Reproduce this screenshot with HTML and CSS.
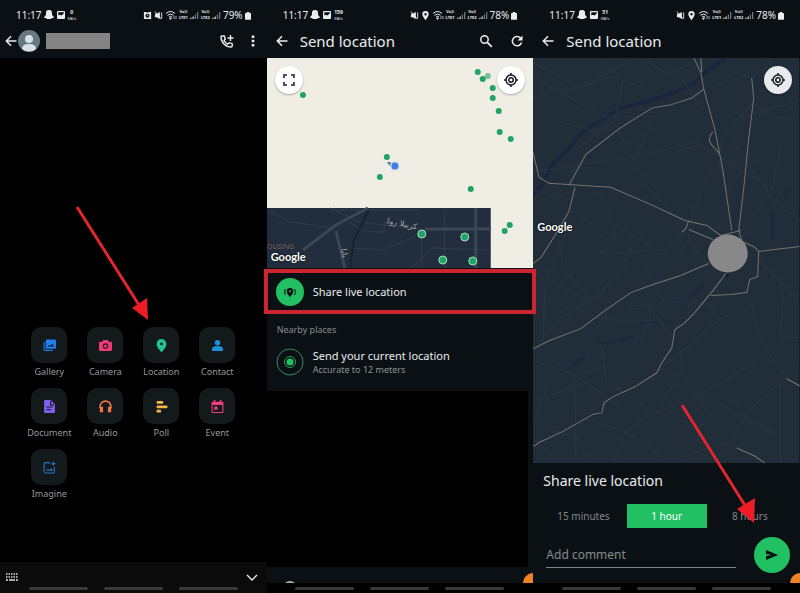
FILE: index.html
```
<!DOCTYPE html>
<html lang="en">
<head>
    <meta charset="UTF-8">
    <meta name="viewport" content="width=device-width, initial-scale=1.0">
    <title>Share live location</title>
    <link rel="stylesheet" href="styles.css">
</head>
<body>
    <!-- Shared icons -->
    <svg class="defs" width="0" height="0" aria-hidden="true">
        <symbol id="snap" viewBox="0 0 10 10"><path d="M5 0c2.500 0 3.300 1.500 3 4 0 1 1 2.500 2 3 0 1-1 1-2 1-1 1.500-2 1-3 1s-2 .5-3-1C1 8 0 8 0 7c1-.5 2-2 2-3-.3-2.500.5-4 3-4z" fill="currentColor"/></symbol>
        <symbol id="photo" viewBox="0 0 10 10"><path d="M2 1h6q1 0 1 1v6q0 1-1 1H2q-1 0-1-1V2q0-1 1-1zm.3 1.300v3.200l1.700-.8 1.600.8L8 3V2.300z" fill="currentColor" fill-rule="evenodd"/></symbol>
        <symbol id="alarm" viewBox="0 0 10 10"><path d="M1 1h2l1 .7h2L7 1h2v8H1z" fill="currentColor"/><circle cx="5" cy="5.300" r="2.300" fill="#0b1014"/><path d="M5 4v1.500h1" stroke="currentColor" fill="none" stroke-width=".8"/></symbol>
        <symbol id="mute" viewBox="0 0 10 10"><path d="M1 3h2L6.500 1v8L3 7H1z" fill="currentColor"/><path d="M1 .5l7 8.500M8.500 1.500v7" stroke="currentColor" stroke-width="1"/></symbol>
        <symbol id="pin" viewBox="0 0 10 10"><path d="M5 0a3.500 3.500 0 0 1 3.500 3.500C8.500 6 5 10 5 10S1.500 6 1.500 3.500A3.500 3.500 0 0 1 5 0zm0 2.300a1.300 1.300 0 1 0 0 2.600 1.300 1.300 0 0 0 0-2.600z" fill="currentColor"/></symbol>
        <symbol id="wifi" viewBox="0 0 12 10"><path d="M1 3.500q4.500-4 9 0M2.500 5.300q3-2.500 6 0M4 7q1.500-1.200 3 0" stroke="currentColor" fill="none"/><path d="M4.500 8h2l-1 1.500zM9 6v3M11 6v3" fill="currentColor" stroke="currentColor" stroke-width=".7"/></symbol>
        <symbol id="bars" viewBox="0 0 10 10"><path d="M1 9V7.500M3.500 9V6" stroke="currentColor" stroke-width="1.300"/><path d="M6 9V4M8.500 9V1" stroke="currentColor" stroke-width="1.300" opacity=".5"/></symbol>
        <symbol id="battery" viewBox="0 0 7 10"><path d="M2 1h3v1h1q1 0 1 1v6q0 1-1 1H1q-1 0-1-1V3q0-1 1-1h1z" fill="currentColor"/></symbol>
        <symbol id="back" viewBox="0 0 12 12"><path d="M11.500 6H1.500M6 1.300L1.300 6 6 10.700" stroke="currentColor" stroke-width="1.500" fill="none"/></symbol>
        <symbol id="target" viewBox="0 0 16 16"><circle cx="8" cy="8" r="5" fill="none" stroke="#1a1a1a" stroke-width="1.500"/><circle cx="8" cy="8" r="2.200" fill="none" stroke="#1a1a1a" stroke-width="1.500"/><path d="M8 1v2M8 13v2M1 8h2M13 8h2" stroke="#1a1a1a" stroke-width="1.500"/></symbol>
    </svg>

    <main class="screens">
        <!-- Screen 1: attachment menu -->
        <section class="screen chat">
            <div class="status">
                <span>11:17</span>
                <svg class="s10"><use href="#snap"/></svg>
                <svg class="s10"><use href="#photo"/></svg>
                <span class="speed"><b>0</b>KB/s</span>
                <span class="push"></span>
                <svg class="s9"><use href="#alarm"/></svg>
                <svg class="s9"><use href="#mute"/></svg>
                <svg class="wifi"><use href="#wifi"/></svg>
                <span class="lte">Vo))<br>LTE1</span><svg class="s9"><use href="#bars"/></svg>
                <span class="lte">Vo))<br>LTE2</span><svg class="s9"><use href="#bars"/></svg>
                <span class="percent">79%</span><svg class="battery"><use href="#battery"/></svg>
            </div>
            <header class="bar chat-bar">
                <button class="icon-btn" aria-label="Back"><svg class="s12"><use href="#back"/></svg></button>
                <svg class="avatar" viewBox="0 0 22 22"><circle cx="11" cy="11" r="11" fill="#667983"/><circle cx="11" cy="9" r="4" fill="#d9e2e7"/><path d="M4 19q0-5 7-5t7 5a11 11 0 0 1-14 0z" fill="#d9e2e7"/></svg>
                <span class="hidden-name"></span>
                <span class="push"></span>
                <button class="icon-btn" aria-label="Add call"><svg class="s14" viewBox="0 0 14 14"><path d="M2 2h2.300l1 3L4 6.500Q5.300 9 7.700 10.200L9.200 8.700l3 1V12q0 1-1 1Q7 13 4 10T1 3q0-1 1-1zM10.500 1v6M7.500 4h6" fill="none" stroke="currentColor" stroke-width="1.400"/></svg></button>
                <button class="icon-btn" aria-label="More"><svg class="dots" viewBox="0 0 4 12"><path d="M.7.500h2.600v2.500H.7zM.7 4.700h2.600v2.600H.7zM.7 9h2.600v2.500H.7z" fill="currentColor"/></svg></button>
            </header>
            <div class="chat-body">
                <div class="tiles">
                    <button class="tile"><span><svg viewBox="0 0 24 24" fill="#1f7ff0"><path d="M7 1h15q2 0 2 2v13q0 2-2 2H7q-2 0-2-2V3q0-2 2-2zm1 13h13l-4-5-4 4-2-2zM1 5h2v15h15v2H3q-2 0-2-2z" fill-rule="evenodd"/></svg></span>Gallery</button>
                    <button class="tile"><span><svg viewBox="0 0 24 24" fill="#f03a78"><path d="M8 2h8l2 3h4q2 0 2 2v13q0 2-2 2H2q-2 0-2-2V7q0-2 2-2h4z"/><circle cx="12" cy="13" r="5" fill="#14191c"/><circle cx="12" cy="13" r="3"/></svg></span>Camera</button>
                    <button class="tile"><span><svg viewBox="0 0 24 24" fill="#1fc490"><path d="M12 0a9 9 0 0 1 9 9c0 7-9 15-9 15S3 16 3 9a9 9 0 0 1 9-9z"/><circle cx="12" cy="9" r="2.500" fill="#14191c"/></svg></span>Location</button>
                    <button class="tile"><span><svg viewBox="0 0 24 24" fill="#1a91d8"><circle cx="12" cy="7" r="5"/><path d="M2 22v-4q0-5 10-5t10 5v4z"/></svg></span>Contact</button>
                    <button class="tile"><span><svg viewBox="0 0 24 24" fill="#8060f0"><path d="M4 0h10l8 8v14q0 2-2 2H4q-2 0-2-2V2q0-2 2-2z"/><path d="M14 2v7h6M6 13h12M6 18h9" fill="none" stroke="#14191c" stroke-width="2"/></svg></span>Document</button>
                    <button class="tile"><span><svg viewBox="0 0 24 24" fill="none" stroke="#e9774a" stroke-width="3"><path d="M2 15v-3a10 10 0 0 1 20 0v3"/><path d="M3 14h3v7H3zM18 14h3v7h-3z" fill="#e9774a"/></svg></span>Audio</button>
                    <button class="tile"><span><svg viewBox="0 0 24 24" fill="#f5b54a"><rect x="3" y="2" width="12" height="5" rx="1"/><rect x="3" y="10" width="20" height="5" rx="1"/><rect x="3" y="18" width="8" height="5" rx="1"/></svg></span>Poll</button>
                    <button class="tile"><span><svg viewBox="0 0 24 24" fill="#ec3f7c"><path d="M5 0h3v3h8V0h3v3h2q2 0 2 2v17q0 2-2 2H3q-2 0-2-2V5q0-2 2-2h2zM3 9v13h18V9zm3 3h6v6H6z" fill-rule="evenodd"/></svg></span>Event</button>
                    <button class="tile"><span><svg viewBox="0 0 24 24" fill="none" stroke="#2379cc" stroke-width="2"><path d="M13 3H4Q2 3 2 5v15q0 2 2 2h15q2 0 2-2v-9"/><path d="M6 18l3-4 3 3 3-4 4 5z" fill="#2379cc" stroke="none"/><path d="M19 0l1.500 3.500L24 5l-3.500 1.500L19 10l-1.500-3.500L14 5l3.500-1.500z" fill="#2379cc" stroke="none"/></svg></span>Imagine</button>
                </div>
            </div>
            <div class="keyboard">
                <button class="icon-btn" aria-label="Keyboard"><svg class="s12" viewBox="0 0 12 12"><path d="M0 3h12M0 6h12" stroke="#ddd" stroke-width="1.500" stroke-dasharray="1.500 1"/><path d="M0 9h2M3 9h6M10 9h2" stroke="#ddd" stroke-width="1.500"/></svg></button>
                <button class="icon-btn" aria-label="Hide"><svg class="s12" viewBox="0 0 12 12"><path d="M1 4l5 5 5-5" fill="none" stroke="#eee" stroke-width="1.400"/></svg></button>
            </div>
            <nav class="nav"><i></i><i></i><i></i></nav>
            <svg class="arrow arrow-location" viewBox="0 0 74 116"><path d="M2 2l62 98" stroke="#e3252e" stroke-width="3"/><path d="M73 115L57 103l15-10z" fill="#ee1c24"/></svg>
        </section>

        <!-- Screen 2: place list -->
        <section class="screen places">
            <div class="status">
                <span>11:17</span>
                <svg class="s10"><use href="#snap"/></svg>
                <svg class="s10"><use href="#photo"/></svg>
                <span class="speed"><b>159</b>KB/s</span>
                <span class="push"></span>
                <svg class="s9"><use href="#mute"/></svg>
                <svg class="s9"><use href="#pin"/></svg>
                <svg class="wifi"><use href="#wifi"/></svg>
                <span class="lte">Vo))<br>LTE1</span><svg class="s9"><use href="#bars"/></svg>
                <span class="lte">Vo))<br>LTE2</span><svg class="s9"><use href="#bars"/></svg>
                <span class="percent">78%</span><svg class="battery"><use href="#battery"/></svg>
            </div>
            <header class="bar">
                <button class="icon-btn" aria-label="Back"><svg class="s12"><use href="#back"/></svg></button>
                <h1>Send location</h1>
                <span class="push"></span>
                <button class="icon-btn" aria-label="Search"><svg class="s14" viewBox="0 0 14 14"><circle cx="5.500" cy="5.500" r="3.700" fill="none" stroke="currentColor" stroke-width="1.500"/><path d="M8.300 8.300l4.500 4.500" stroke="currentColor" stroke-width="1.800"/></svg></button>
                <button class="icon-btn" aria-label="Refresh"><svg class="s14" viewBox="0 0 14 14"><path d="M11 4.500A4.700 4.700 0 1 0 11.600 8.500" fill="none" stroke="currentColor" stroke-width="1.500"/><path d="M12.500 1.500v5H7.500z" fill="currentColor"/></svg></button>
            </header>
            <div class="map map-light">
                <svg class="map-art" viewBox="267 58 267 210" preserveAspectRatio="none">
                    <rect x="267" y="58" width="267" height="210" fill="#f0ede5"/>
                    <rect x="267" y="208" width="224" height="60" fill="#222d3d"/>
                    <g fill="none" stroke="#323d4b" stroke-width="1">
                        <path d="M267 210l23 12 45 6M330 208l30 14 65 8 66-2M385 222l-1 10-20-1-15-9M352 248l30 2 35-14M422 230v38M445 210v60M330 210l90 0M412 268l20-20 59 2"/>
                        <path d="M303 250l33-25 32-17M336 231l9 37M476 208v60M425 229h66" stroke="#3c4755" stroke-width="3"/>
                        <path d="M369 210l-15 30-4 28" stroke="#19222f" stroke-width="2"/>
                    </g>
                    <text x="386" y="223" class="road" transform="rotate(12 386 223)">كربيلا روڈ</text>
                    <text x="341" y="249" class="road" transform="rotate(80 341 249)">بابا</text>
                    <text x="267" y="249" class="area">OUSING</text>
                    <g fill="#22a366">
                        <circle cx="303" cy="95" r="3"/><circle cx="478" cy="72" r="3"/><circle cx="483" cy="79" r="3"/><circle cx="488" cy="76" r="3" opacity=".6"/>
                        <circle cx="493" cy="88" r="3"/><circle cx="493" cy="98" r="3"/><circle cx="499" cy="111" r="3"/><circle cx="500" cy="132" r="3"/><circle cx="511" cy="139" r="3"/>
                        <circle cx="387" cy="157" r="3"/><circle cx="380" cy="177" r="3"/><circle cx="471" cy="189" r="3"/><circle cx="510" cy="225" r="3"/><circle cx="505" cy="231" r="3"/>
                    </g>
                    <g fill="#22a366" stroke="#a6e2c0">
                        <circle cx="422" cy="234" r="4"/><circle cx="465" cy="237" r="4"/><circle cx="443" cy="260" r="4"/><circle cx="473" cy="261" r="4"/>
                    </g>
                    <path d="M387 162l4 0-1 4z" fill="#58738c"/>
                    <circle cx="395" cy="166" r="4" fill="#3f7de0" stroke="#b9cdf0"/>
                </svg>
                <div class="map-buttons">
                    <button class="round" aria-label="Full screen"><svg class="s14" viewBox="0 0 14 14"><path d="M2 5V2h3M9 2h3v3M12 9v3H9M5 12H2V9" fill="none" stroke="#222" stroke-width="1.600"/></svg></button>
                    <button class="round" aria-label="My position"><svg class="s16"><use href="#target"/></svg></button>
                </div>
                <span class="google">Google</span>
            </div>
            <div class="list">
                <button class="row live">
                    <svg class="row-icon" viewBox="0 0 28 28"><circle cx="14" cy="14" r="14" fill="#21c063"/><path d="M14 10a3.300 3.300 0 0 1 3.300 3.300c0 2.500-3.300 5.700-3.300 5.700s-3.300-3.200-3.300-5.700A3.300 3.300 0 0 1 14 10z" fill="#0b1014"/><circle cx="14" cy="13.300" r="1" fill="#21c063"/><path d="M9.300 11q-1.300 3 0 6M18.700 11q1.300 3 0 6" fill="none" stroke="#0b1014" stroke-width="1"/></svg>
                    <span class="row-title">Share live location</span>
                </button>
                <h2>Nearby places</h2>
                <button class="row">
                    <svg class="row-icon" viewBox="0 0 28 28"><circle cx="14" cy="14" r="13" fill="none" stroke="#338861"/><circle cx="14" cy="14" r="5.500" fill="none" stroke="#21a35a"/><circle cx="14" cy="14" r="3.500" fill="#21c063"/></svg>
                    <span><span class="row-title">Send your current location</span><small>Accurate to 12 meters</small></span>
                </button>
            </div>
            <div class="blank"></div>
            <div class="foot"><span class="peek"></span><span class="badge"></span></div>
            <nav class="nav"><i></i><i></i><i></i></nav>
        </section>

        <!-- Screen 3: live location options -->
        <section class="screen share">
            <div class="status">
                <span>11:17</span>
                <svg class="s10"><use href="#snap"/></svg>
                <svg class="s10"><use href="#photo"/></svg>
                <span class="speed"><b>51</b>KB/s</span>
                <span class="push"></span>
                <svg class="s9"><use href="#mute"/></svg>
                <svg class="s9"><use href="#pin"/></svg>
                <svg class="wifi"><use href="#wifi"/></svg>
                <span class="lte">Vo))<br>LTE1</span><svg class="s9"><use href="#bars"/></svg>
                <span class="lte">Vo))<br>LTE2</span><svg class="s9"><use href="#bars"/></svg>
                <span class="percent">78%</span><svg class="battery"><use href="#battery"/></svg>
            </div>
            <header class="bar">
                <button class="icon-btn" aria-label="Back"><svg class="s12"><use href="#back"/></svg></button>
                <h1>Send location</h1>
            </header>
            <div class="map map-dark">
                <svg class="map-art" viewBox="0 58 267 404" preserveAspectRatio="none">
                    <rect y="58" width="267" height="404" fill="#222d3a"/>
                    <!-- river -->
                    <path d="M192 59l-18 12-15 14-20 8-27 9-24 6-18 11-20 12-13 16-18 17-8 18-12 14" fill="none" stroke="#1a2340" stroke-width="3"/>
                    <path d="M170 284l-12 12-10 10M138 320l-30 2M100 336l-14 4M80 341l-16 2M52 356l-14 8M240 240v-28M250 193l8-4" fill="none" stroke="#1b2639" stroke-width="2"/>
                    <!-- minor roads -->
                    <g fill="none" stroke="#2a3542">
                        <path d="M0 63l48 25 50-28M0 98l20-8 28-2 30-12 34 12M70 60l14 14M112 60l22 14 24-10M174 88l40-12M85 130l32 60 22 23M0 172l64-10 40-6 60-14 48 30 30 18M120 120l-16 36M165 145l-30 10M219 104l-28 30-6 26 14 40M187 160h40M222 105l20 12 24 3M234 60l20 20 13 4M247 150l-8 40"/>
                        <path d="M178 170l-18 40-4 32 20 24M64 190l19 40-10 20-6 3M0 190l40 10M83 225l36 20M67 253l63-3 24-18M156 240l-8 14M30 240l-18 44-2 60M0 272l56 28 38-32M56 300l-26 16-16 18M26 240l4 28 30 32M226 260l38 38M250 292l-2 45h19M219 304l9 36 26 38M94 306l22-2 20 30M108 338l10-20-4-20M188 318l-36 30-24 20M188 318l-12-14M219 306l-31 12M0 360l42 14 45 32M42 374l1 80M50 375l22-10-4-20M70 348l4 36M148 370l-16 28-10 14 46-18 54-32M148 370l24 38-8 32M147 348l2 22M14 388l-14 32M254 376l-32 28-28 40M214 418l34 20M254 376l13-9M248 382v80M120 412l-28 20-10 28M92 430l-42-12-20 14M92 430l38 26M120 412l-38-26M168 394l38 8M0 438l24 20M20 430l24 6 12 26M154 455l34-12 14 6"/>
                        <path d="M0 76l70 40 60 0M20 120l40 10 24 0M46 160l-24 40M90 80l-8 40-40 30M200 120l67-20M200 140l40 60 27 20M232 200l-26 44M150 80l20 30M110 260l20 40 50 4M40 210l60 40-30 40M10 300l70 20 50 0M0 400l60-20M180 400l60 30"/>
                    </g>
                    <!-- main roads -->
                    <g fill="none" stroke="#77736e" stroke-width="1">
                        <path d="M161 58l7 14 3 17 11 40 8 40 9 61M168 58l1 14M171 89l-12 9-22 7-18 3-32 20-34 26-17 31M180 132q-8 8 3 17l4 5M219 78l2 20-5 40-5 50-5 42 3 10"/>
                        <path d="M42 187l-6 24-14 24-14 22-8 6"/>
                        <path d="M0 152l6 25 10 6 62 4 44 19 30 14 22 5 14 10 20-5M156 229l24 10M156 220l-3 8-4 4M209 241l12 5 5 5-1 25-8 3-3 13-16 2-20 1M226 251l41-5"/>
                        <path d="M176 263l-28 12-28 9-22 8-26 18-24 18-32 12-16 8M193 273l-12 16-20 24-10 10-9 6-3 18-10 15-5 10-22 14-22 10-9 6-2 10-8 1-32 18-24 11q-4 5-7 1M254 378l13 7M204 447l18 8 10 7"/>
                    </g>
                    <circle cx="195" cy="275" r="1" fill="#080c12"/>
                    <ellipse cx="195" cy="253" rx="20" ry="19" fill="#888"/>
                </svg>
                <div class="map-buttons">
                    <span class="push"></span>
                    <button class="round" aria-label="My position"><svg class="s16"><use href="#target"/></svg></button>
                </div>
                <span class="google">Google</span>
            </div>
            <form class="sheet">
                <h2>Share live location</h2>
                <div class="durations">
                    <label><input type="radio" name="duration" value="15m">15 minutes</label>
                    <label><input type="radio" name="duration" value="1h" checked>1 hour</label>
                    <label><input type="radio" name="duration" value="8h">8 hours</label>
                </div>
                <div class="comment">
                    <input type="text" placeholder="Add comment" aria-label="Add comment">
                    <button type="button" class="send" aria-label="Send"><svg class="s14" viewBox="0 0 14 14"><path d="M1 2l12 5-12 5V8l6-1-6-1z" fill="#0b1014"/></svg></button>
                </div>
                <span class="badge"></span>
            </form>
            <nav class="nav"><i></i><i></i><i></i></nav>
            <svg class="arrow arrow-send" viewBox="0 0 76 122"><path d="M2 3l64 102" stroke="#e3252e" stroke-width="3"/><path d="M74 121L57 107l18-11z" fill="#ee1c24"/></svg>
        </section>
    </main>
</body>
</html>
```
FILE: styles.css
```
/* Basic Reset */
* { box-sizing: border-box; margin: 0; padding: 0; }

body {
    background: #000;
    color: #e9edef;
    font-family: "Noto Sans", sans-serif;
    font-size: 10px;
}

button, input {
    background: none;
    border: none;
    color: inherit;
    font: inherit;
}

svg { display: block; flex: none; }
.defs { position: absolute; }

/* Screens */
.screens {
    display: grid;
    grid-template-columns: repeat(3, 1fr);
    min-height: 100vh;
    overflow: hidden;
}

.screen {
    position: relative;
    display: flex;
    flex-direction: column;
    min-width: 0;
}

.push { flex: 1; }

/* Icon sizes */
.s9 { width: 9px; height: 9px; }
.s10 { width: 10px; height: 10px; }
.s12 { width: 12px; height: 12px; }
.s14 { width: 14px; height: 14px; }
.s16 { width: 16px; height: 16px; }
.dots { width: 4px; height: 12px; }
.wifi { width: 12px; height: 10px; }
.battery { width: 6px; height: 9px; }

/* Status bar */
.status {
    display: flex;
    align-items: center;
    gap: 2px;
    height: 24px;
    padding: 6px 16px 0;
    background: #0b1014;
    line-height: 12px;
}

.speed, .lte {
    font-size: 4px;
    line-height: 6px;
    text-align: center;
}

.speed b {
    display: block;
    font-size: 5px;
    line-height: 7px;
}

.lte { font-weight: bold; }

/* App bar */
.bar {
    display: flex;
    align-items: center;
    height: 34px;
    padding: 0 3px;
    background: #0b1014;
}

.bar h1 {
    margin-left: 6px;
    padding-bottom: 1px;
    font-size: 15px;
    font-weight: normal;
    line-height: 20px;
}

.bar .icon-btn + .icon-btn { margin-left: 5px; }

.icon-btn {
    display: flex;
    padding: 6px;
}

.chat-bar { padding: 0 6px 0 0; }
.chat-bar .icon-btn:first-child { padding: 6px 1px 6px 5px; }
.avatar { width: 22px; height: 22px; }

.hidden-name {
    width: 64px;
    height: 16px;
    margin-left: 6px;
    background: #848484;
}

/* Attachment tiles */
.chat-body {
    display: flex;
    flex: 1;
    flex-direction: column;
    justify-content: flex-end;
    padding-bottom: 62px;
}

.tiles {
    display: grid;
    grid-template-columns: repeat(4, 56px);
    justify-content: center;
    row-gap: 10px;
}

.tile {
    display: flex;
    flex-direction: column;
    align-items: center;
    gap: 3px;
    color: #94999c;
    font-size: 9px;
    line-height: 12px;
}

.tile span {
    display: flex;
    align-items: center;
    justify-content: center;
    width: 36px;
    height: 36px;
    border-radius: 10px;
    background: #14191c;
}

.tile svg { width: 13px; height: 13px; }

.keyboard {
    display: flex;
    justify-content: space-between;
    align-items: flex-end;
    height: 21px;
    padding: 0 9px 0 0;
    background: #0b0b0b;
}

.keyboard .icon-btn { padding: 0 0 0 6px; }

.chat .nav { background: #0b0b0b; }

/* Navigation bar */
.nav {
    display: flex;
    justify-content: center;
    gap: 16px;
    height: 10px;
    padding-top: 4px;
}

.nav i {
    width: 59px;
    height: 3px;
    border-radius: 2px;
    background: #393939;
}

/* Maps */
.map {
    position: relative;
    display: flex;
    flex-direction: column;
    justify-content: space-between;
}

.map-light { height: 210px; }
.map-dark { flex: 1; }

.map-art {
    position: absolute;
    width: 100%;
    height: 100%;
}

.map-buttons {
    position: relative;
    display: flex;
    justify-content: space-between;
    padding: 8px;
}

.round {
    display: flex;
    align-items: center;
    justify-content: center;
    width: 28px;
    height: 28px;
    border-radius: 50%;
    background: #fff;
    box-shadow: 0 1px 2px rgba(0, 0, 0, 0.3);
}

.map-dark .round { background: #e8eaed; }

.google {
    position: relative;
    padding: 0 4px 3px;
    color: #fff;
    font: bold 11px/16px Lato, sans-serif;
    text-shadow: 0 0 2px #000;
}

.map-dark .google { margin-bottom: 225px; }

.road { fill: #a3a8ad; font: 8px "DejaVu Sans", sans-serif; }
.area { fill: #7c6058; font: 7px "Noto Sans", sans-serif; }

/* Place list */
.list {
    position: relative;
    z-index: 1;
    height: 123px;
    background: #0b1014;
}

.row {
    position: relative;
    display: flex;
    align-items: center;
    gap: 9px;
    width: 100%;
    height: 46px;
    padding: 2px 9px 0;
    text-align: left;
}

.row-icon { width: 28px; height: 28px; }

.row-title {
    display: block;
    font-size: 11px;
    line-height: 16px;
}

.row small {
    display: block;
    color: #8d9598;
    font-size: 9px;
    line-height: 12px;
}

.live::after {
    content: "";
    position: absolute;
    inset: 1px -3px 0;
    border: 4px solid #cc2530;
}

.list h2 {
    padding: 8px 10px 0;
    color: #858d91;
    font-size: 9px;
    font-weight: normal;
    line-height: 16px;
}

.blank {
    flex: 1;
    border-right: 5px solid #0b1014;
}

.foot {
    position: relative;
    height: 16px;
    overflow: hidden;
    background: #0b1014;
}

.peek {
    position: absolute;
    left: 16px;
    top: 14px;
    width: 14px;
    height: 14px;
    border-radius: 50%;
    background: #a5adb0;
}

.badge {
    position: absolute;
    right: 0;
    bottom: 0;
    width: 10px;
    height: 10px;
    border-radius: 10px 0 0 0;
    background: #f08325;
}

/* Share sheet */
.sheet {
    position: relative;
    padding: 8px 10px 10px;
    background: #0b1014;
}

.sheet h2 {
    font-size: 14px;
    font-weight: normal;
    line-height: 20px;
}

.durations {
    display: grid;
    grid-template-columns: repeat(3, 1fr);
    gap: 3px;
    margin: 13px 0 9px;
}

.durations label {
    border-radius: 1px;
    color: #81898d;
    line-height: 24px;
    text-align: center;
}

.durations label:has(:checked) {
    background: #21c063;
    color: #fff;
}

.durations input {
    position: absolute;
    appearance: none;
}

.comment {
    display: flex;
    justify-content: space-between;
    align-items: center;
    gap: 18px;
}

.comment input {
    flex: 1;
    min-width: 0;
    height: 26px;
    margin-left: 3px;
    border-bottom: 1px solid #7b8387;
    font-size: 12px;
}

.comment input::placeholder { color: #858d91; }

.send {
    display: flex;
    align-items: center;
    justify-content: center;
    width: 36px;
    height: 36px;
    border-radius: 50%;
    background: #21c063;
}

/* Pointer arrows */
.arrow { position: absolute; z-index: 2; pointer-events: none; }
.arrow-location { width: 74px; height: 116px; left: 75px; top: 205px; }
.arrow-send { width: 76px; height: 122px; left: 147px; bottom: 69px; }
```
